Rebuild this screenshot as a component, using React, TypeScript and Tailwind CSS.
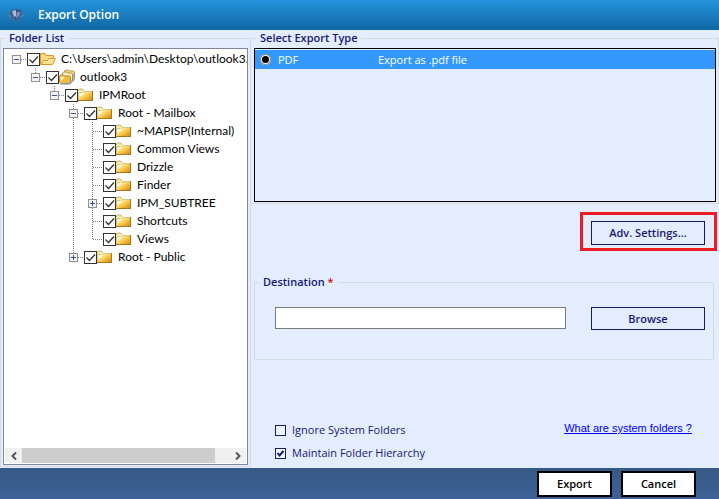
import React, { useState } from 'react';

interface TreeRow {
  name: string;
  depth: number;
  icon: 'open' | 'stack' | 'folder';
  toggle?: 'open' | 'closed';
  lines?: number[];
  last?: boolean;
}

const rows: TreeRow[] = [
  { name: 'C:\\Users\\admin\\Desktop\\outlook3.', depth: 0, icon: 'open', toggle: 'open' },
  { name: 'outlook3', depth: 1, icon: 'stack', toggle: 'open', last: true },
  { name: 'IPMRoot', depth: 2, icon: 'folder', toggle: 'open', last: true },
  { name: 'Root - Mailbox', depth: 3, icon: 'folder', toggle: 'open' },
  { name: '~MAPISP(Internal)', depth: 4, icon: 'folder', lines: [3] },
  { name: 'Common Views', depth: 4, icon: 'folder', lines: [3] },
  { name: 'Drizzle', depth: 4, icon: 'folder', lines: [3] },
  { name: 'Finder', depth: 4, icon: 'folder', lines: [3] },
  { name: 'IPM_SUBTREE', depth: 4, icon: 'folder', toggle: 'closed', lines: [3] },
  { name: 'Shortcuts', depth: 4, icon: 'folder', lines: [3] },
  { name: 'Views', depth: 4, icon: 'folder', lines: [3], last: true },
  { name: 'Root - Public', depth: 3, icon: 'folder', toggle: 'closed', last: true },
];

const FolderIcon: React.FC<{ type: TreeRow['icon'] }> = ({ type }) => {
  if (type === 'open') {
    return (
      <svg className="w-4 h-4 shrink-0" viewBox="0 0 16 16">
        <path d="M.5 13.500V2.500h4.500l1 2h7.500v3" fill="#fbdc80" stroke="#d9952c" />
        <path d="M.5 13.500L3.500 9.500h4l1.500-2h6.500L12.500 13.500z" fill="#fde08a" stroke="#dc9422" />
        <path d="M4.500 10.500h3.500l1.500-2h5" fill="none" stroke="#fff4c8" />
      </svg>
    );
  }
  if (type === 'stack') {
    return (
      <svg className="w-4 h-4 shrink-0" viewBox="0 0 16 16">
        <path d="M5.500 6V2l1-1h3l1 1h4l1 1v6l-3 3z" fill="#f6d778" stroke="#b99a50" />
        <path d="M3.500 8V4l1-1h3l1 1h4l1 1v6l-3 3z" fill="#fff0b5" stroke="#a8925c" />
        <path d="M.5 13V7.500l1-1.500h3l1 1h5l1 1v5l-1.500 1.500h-8z" fill="#efbb42" stroke="#b08a3c" />
        <path d="M1.500 8l3-.5 1 1.500-4 3z" fill="#fff3b8" />
        <path d="M1 15h10l4-4V5" fill="none" stroke="#6f9ac5" />
      </svg>
    );
  }
  return (
    <svg className="w-4 h-4 shrink-0" viewBox="0 0 16 16">
      <defs>
        <linearGradient id="folder" x1="0" y1="0" x2="1" y2="1">
          <stop offset="0.25" stopColor="#fff0a8" />
          <stop offset="0.500" stopColor="#fbcb50" />
          <stop offset="1" stopColor="#c98208" />
        </linearGradient>
      </defs>
      <path d="M.5 4.500V3l1-1h3l1.500 2" fill="#f8e7a2" stroke="#c3b078" />
      <path d="M0 4h15v10H0z" fill="url(#folder)" />
      <path d="M.5 14V5.500h5L7 4.500h8" fill="none" stroke="#d8c488" />
      <path d="M0 13.500h14.500V4" fill="none" stroke="#a8781c" />
      <path d="M1.500 9l4-3" stroke="#fffbe2" strokeWidth="2" />
    </svg>
  );
};

const Branch: React.FC<{ row: TreeRow }> = ({ row }) => (
  <svg className="w-5 h-[18px] shrink-0" viewBox="0 0 20 18" shapeRendering="crispEdges">
    {row.depth > 0 && (
      <path d={row.last ? 'M9.500 0V10' : 'M9.500 0V18'} stroke="#808080" strokeDasharray="1 1" />
    )}
    <path d="M10 9.500H20" stroke="#808080" strokeDasharray="1 1" />
    {row.toggle && (
      <>
        <rect x="5.500" y="5.500" width="8" height="8" fill="#f4f4f4" stroke="#919191" />
        <path d="M7 9.500h5" stroke="#3a55a4" />
        {row.toggle === 'closed' && <path d="M9.500 7v5" stroke="#3a55a4" />}
      </>
    )}
  </svg>
);

const TreeItem: React.FC<{ row: TreeRow }> = ({ row }) => (
  <li className="flex items-center h-[18px]">
    {Array.from({ length: row.depth }, (_, i) => (
      <svg key={i} className="w-[19px] h-[18px] shrink-0" viewBox="0 0 19 18" shapeRendering="crispEdges">
        {row.lines?.includes(i) && <path d="M9.500 0V18" stroke="#808080" strokeDasharray="1 1" />}
      </svg>
    ))}
    <Branch row={row} />
    <label className="flex items-center whitespace-nowrap">
      <span className="relative w-[13px] h-[13px] shrink-0">
        <input type="checkbox" defaultChecked className="peer block appearance-none w-[13px] h-[13px] bg-white border border-[#333333]" />
        <svg className="absolute inset-0 hidden peer-checked:block pointer-events-none" viewBox="0 0 13 13">
          <path d="M2.500 6.500l3 3 5.500-6" fill="none" stroke="#333333" strokeWidth="1.300" />
        </svg>
      </span>
      <FolderIcon type={row.icon} />
      <span className="ml-[5px] leading-[18px]">{row.name}</span>
    </label>
  </li>
);

const Option: React.FC<{ label: string; checked?: boolean }> = ({ label, checked }) => (
  <label className="flex items-center gap-1.5 text-[#191970]">
    <span className="relative w-[11px] h-[11px]">
      <input type="checkbox" defaultChecked={checked} className="peer block appearance-none w-[11px] h-[11px] bg-[#f0f4ff] border border-[#191970]" />
      <svg className="absolute inset-0 hidden peer-checked:block pointer-events-none" viewBox="0 0 11 11">
        <path d="M2.500 5l2 2.500 4-4.500" fill="none" stroke="#191970" strokeWidth="2" />
      </svg>
    </span>
    {label}
  </label>
);

const App: React.FC = () => {
  const [path, setPath] = useState('');

  return (
    <div className="flex flex-col min-h-screen bg-[#e3edff] text-black text-[12px] leading-4 font-['Open_Sans',sans-serif]">
      <header className="flex items-center h-[30px] pl-2 gap-3.5 bg-linear-to-b from-[#2493dc] to-[#0f67a2] text-white">
        <svg className="w-4 h-4" viewBox="0 0 16 16">
          <path d="M0 8l3-4 10-1 3 5-3 4-5 4-5-4z" fill="#3b6e9e" opacity="0.700" />
          <path d="M3 3l5-1 5 1-1 6-4 5-4-5z" fill="#3f5288" />
          <path d="M4 4l4-1v6l-2 1z" fill="#a6bddd" />
          <path d="M9 5h3l-1 4-3 3z" fill="#7f97c4" />
          <path d="M0 8l3 2M13 10l3-2" stroke="#7b8796" />
        </svg>
        <h1 className="font-semibold">Export Option</h1>
      </header>

      <main className="flex flex-1">
        <fieldset className="flex flex-col w-[251px] min-w-0 shrink-0 border border-[#d9dadd] px-[2px] pt-[2px] pb-px mb-px">
          <legend className="ml-0.5 px-1 text-[11px] font-semibold text-[#191970]">Folder List</legend>
          <div className="flex flex-col flex-1 min-h-0 bg-white border border-[#7f8899]">
            <ul className="flex-1 overflow-hidden pt-px pl-[3px] font-['Lato',sans-serif]">
              {rows.map((row) => (
                <TreeItem key={row.name} row={row} />
              ))}
            </ul>
            <div className="flex h-[15px] mx-px mb-px bg-[#f0f0f0]">
              <button aria-label="Scroll left" className="flex items-center justify-center w-[17px]">
                <svg className="w-2 h-2" viewBox="0 0 8 8"><path d="M6 0.500L2.500 4 6 7.500" fill="none" stroke="#555555" strokeWidth="2" /></svg>
              </button>
              <div className="flex-1">
                <div className="w-[93%] h-full bg-[#cdcdcd]" />
              </div>
              <button aria-label="Scroll right" className="flex items-center justify-center w-[17px]">
                <svg className="w-2 h-2" viewBox="0 0 8 8"><path d="M2 0.500L5.500 4 2 7.500" fill="none" stroke="#555555" strokeWidth="2" /></svg>
              </button>
            </div>
          </div>
        </fieldset>

        <div className="flex-1 min-w-0 flex flex-col">
          <fieldset className="border border-[#d9dadd] border-l-0 px-[2px] pt-[2px] pb-px pl-[3px]">
            <legend className="ml-0.5 px-1 text-[11px] font-semibold text-[#191970]">Select Export Type</legend>
            <div className="h-[154px] border border-black pt-px">
              <label className="flex items-center h-[19px] pl-[5px] bg-[#3399ff] text-[11px] text-white">
                <input type="radio" name="type" defaultChecked className="appearance-none w-[11px] h-[11px] rounded-full bg-black border-2 border-white outline outline-[#777777] -outline-offset-1" />
                <span className="w-[100px] ml-[7px]">PDF</span>
                <span>Export as .pdf file</span>
              </label>
            </div>
          </fieldset>

          <div className="flex justify-end mt-2 mr-0.5">
            <div className="border-3 border-[#ed1c24] pl-2 pr-[9px] pt-1.5 pb-[3px]">
              <button className="block w-[114px] h-6 border border-[#191970] text-[11px] font-semibold text-[#191970]">Adv. Settings...</button>
            </div>
          </div>

          <fieldset className="flex items-start gap-[25px] min-w-0 mt-[23px] ml-[3px] mr-[5px] border border-[#d9dadd] pl-5 pr-2 pt-[17px] pb-[29px]">
            <legend className="ml-[-16px] px-1 text-[11px] font-semibold text-[#191970]">
              Destination <span className="text-red-600">*</span>
            </legend>
            <input
              aria-label="Destination"
              value={path}
              onChange={(e) => setPath(e.target.value)}
              className="flex-1 min-w-0 h-[22px] px-1 bg-white border border-[#7a7a7a]"
            />
            <button className="w-[114px] h-[23px] border border-[#191970] text-[11px] font-semibold text-[#191970]">Browse</button>
          </fieldset>

          <div className="flex justify-between items-start mt-auto pl-6 pr-[27px] pb-[7px] text-[11px]">
            <div className="flex flex-col gap-[7px]">
              <Option label="Ignore System Folders" />
              <Option label="Maintain Folder Hierarchy" checked />
            </div>
            <a href="#system-folders" className="font-['Liberation_Sans',sans-serif] text-[11px] leading-3 text-[#0000ff] underline">What are system folders ?</a>
          </div>
        </div>
      </main>

      <footer className="flex justify-end gap-[9px] h-[31px] pt-[3px] pr-[23px] bg-linear-to-b from-[#365985] to-[#3e6199]">
        <button className="w-[75px] h-[26px] bg-white border-2 border-black text-[11px] font-semibold">Export</button>
        <button className="w-[75px] h-[26px] bg-white border-2 border-black text-[11px] font-semibold">Cancel</button>
      </footer>
    </div>
  );
};

export default App;
